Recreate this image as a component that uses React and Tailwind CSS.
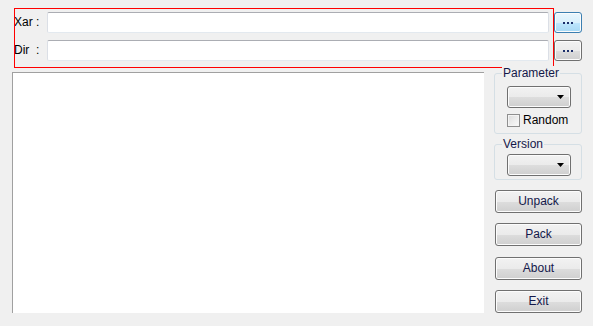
import React from 'react';

const btnGray =
  'border border-[#707070] rounded-[3px] bg-[linear-gradient(to_bottom,#f2f2f2_0%,#ebebeb_50%,#dddddd_51%,#cfcfcf_100%)] shadow-[inset_0_0_0_1px_#fcfcfc]';
const btnBlue =
  'border border-[#3c7fb1] rounded-[3px] bg-[linear-gradient(to_bottom,#eaf6fd_0%,#d9f0fc_50%,#bee6fd_51%,#a7d9f5_100%)] shadow-[inset_0_0_0_1px_#fcfcfc]';

const PathRow = ({ label, focused }) => (
  <div className="flex items-center h-[21px]">
    <span className="w-[33px] leading-[21px] whitespace-pre">{label}</span>
    <div className="w-[502px] h-[21px] bg-white rounded-[2px] border border-t-[#abadb3] border-x-[#dbdfe6] border-b-[#e3e9ef]" />
    <button className={`ml-[5px] w-[28px] h-[21px] flex items-center justify-center gap-[2px] ${focused ? btnBlue : btnGray}`}>
      <span className="w-[2px] h-[2px] bg-[#1c2f6a]" />
      <span className="w-[2px] h-[2px] bg-[#1c2f6a]" />
      <span className="w-[2px] h-[2px] bg-[#1c2f6a]" />
    </button>
  </div>
);

const Dropdown = () => (
  <div className={`w-[64px] h-[22px] flex items-center justify-end pr-[6px] ${btnGray}`}>
    <svg width="7" height="4" viewBox="0 0 7 4">
      <path d="M0 0h7L3.5 4z" fill="#000" />
    </svg>
  </div>
);

const Group = ({ title, className, children }) => (
  <div className={`relative border border-[#d5dfe5] rounded-[3px] ${className}`}>
    <span className="absolute left-[7px] top-[-8px] px-[1px] bg-[#f0f0f0] leading-[14px] text-[#14184a]">{title}</span>
    {children}
  </div>
);

const ActionButton = ({ children, className }) => (
  <button className={`w-[87px] h-[23px] ml-[1px] leading-[21px] text-center text-[#14184a] ${btnGray} ${className}`}>
    {children}
  </button>
);

export default function App() {
  return (
    <div className="w-[593px] h-[326px] bg-[#f0f0f0] text-[12px] text-black font-['Liberation_Sans',Tahoma,Arial,sans-serif] overflow-hidden">
      <div className="relative pt-[12px] pl-[14px] flex flex-col gap-[7px]">
        <PathRow label="Xar :" focused />
        <PathRow label="Dir  :" />
        {/* red highlight */}
        <div className="absolute left-[14px] top-[8px] w-[540px] h-[60px] border border-[#ff0000] pointer-events-none" />
      </div>

      <div className="flex pl-[12px] mt-[11px]">
        <div className="w-[472px] h-[241px] bg-white border-t border-l border-[#a0a0a0]" />

        <div className="ml-[10px] w-[88px] flex flex-col">
          <Group title="Parameter" className="mt-[1px] h-[61px] pt-[12px] pl-[12px]">
            <Dropdown />
            <label className="flex items-center mt-[6px] h-[13px]">
              <span className="w-[13px] h-[13px] border border-[#8f8f8f] bg-[linear-gradient(135deg,#dcdcdc,#fbfbfb)] shadow-[inset_0_0_0_1px_#f4f4f4]" />
              <span className="ml-[3px] leading-[13px]">Random</span>
            </label>
          </Group>

          <Group title="Version" className="mt-[10px] h-[36px] pt-[9px] pl-[12px]">
            <Dropdown />
          </Group>

          <ActionButton className="mt-[10px]">Unpack</ActionButton>
          <ActionButton className="mt-[10px]">Pack</ActionButton>
          <ActionButton className="mt-[11px]">About</ActionButton>
          <ActionButton className="mt-[10px]">Exit</ActionButton>
        </div>
      </div>
    </div>
  );
}
